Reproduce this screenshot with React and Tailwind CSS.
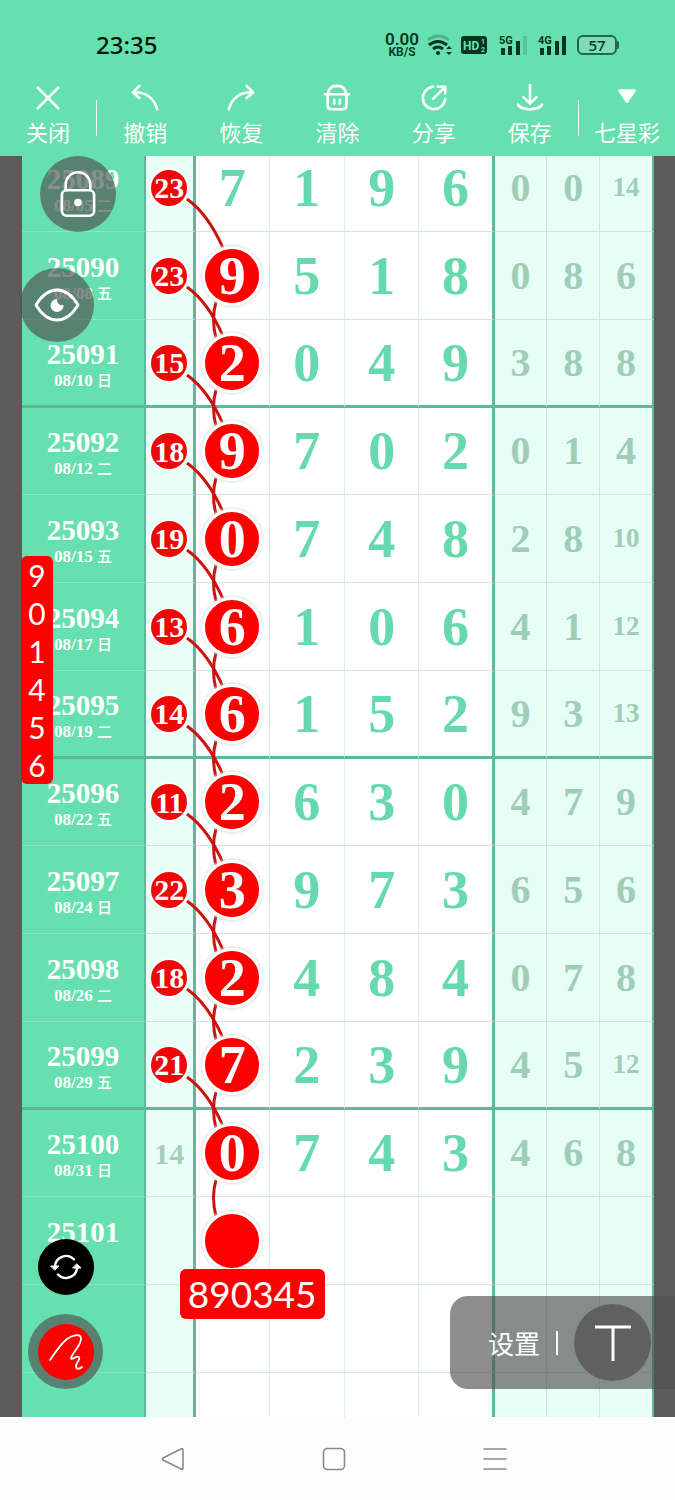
import React from "react";
import clsx from "clsx";

const ROWS = [
  { issue: "25089", date: "08/05", day: "二", sum: 23, main: [7, 1, 9, 6], rest: [0, 0, 14] },
  { issue: "25090", date: "08/08", day: "五", sum: 23, main: [9, 5, 1, 8], rest: [0, 8, 6] },
  { issue: "25091", date: "08/10", day: "日", sum: 15, main: [2, 0, 4, 9], rest: [3, 8, 8], weekEnd: true },
  { issue: "25092", date: "08/12", day: "二", sum: 18, main: [9, 7, 0, 2], rest: [0, 1, 4], weekStart: true },
  { issue: "25093", date: "08/15", day: "五", sum: 19, main: [0, 7, 4, 8], rest: [2, 8, 10] },
  { issue: "25094", date: "08/17", day: "日", sum: 13, main: [6, 1, 0, 6], rest: [4, 1, 12] },
  { issue: "25095", date: "08/19", day: "二", sum: 14, main: [6, 1, 5, 2], rest: [9, 3, 13], weekEnd: true },
  { issue: "25096", date: "08/22", day: "五", sum: 11, main: [2, 6, 3, 0], rest: [4, 7, 9], weekStart: true },
  { issue: "25097", date: "08/24", day: "日", sum: 22, main: [3, 9, 7, 3], rest: [6, 5, 6] },
  { issue: "25098", date: "08/26", day: "二", sum: 18, main: [2, 4, 8, 4], rest: [0, 7, 8] },
  { issue: "25099", date: "08/29", day: "五", sum: 21, main: [7, 2, 3, 9], rest: [4, 5, 12], weekEnd: true },
  { issue: "25100", date: "08/31", day: "日", sum: 14, plainSum: true, main: [0, 7, 4, 3], rest: [4, 6, 8], weekStart: true },
  { issue: "25101", main: ["", "", "", ""], rest: ["", "", ""], pick: "890345" },
  { issue: "", main: ["", "", "", ""], rest: ["", "", ""] },
  { issue: "", main: ["", "", "", ""], rest: ["", "", ""] },
];

const SIDE_DIGITS = ["9", "0", "1", "4", "5", "6"];

const strokeProps = {
  fill: "none",
  stroke: "currentColor",
  strokeWidth: 2.8,
  strokeLinecap: "round",
  strokeLinejoin: "round",
};

const TOOLS = [
  { label: "关闭", icon: <path d="M4 4L26 26M26 4L4 26" />, divider: true },
  { label: "撤销", icon: <path d="M9 2L2 9L9 15M2 9C15 8 25 15 28 27" /> },
  { label: "恢复", icon: <path d="M21 2L28 9L21 15M28 9C15 8 5 15 2 27" /> },
  {
    label: "清除",
    icon: <path d="M2 11H28M5 11C6 5 10 2 15 2C20 2 24 5 25 11M5 11V23Q5 27 9 27H21Q25 27 25 23V11M12 17V21M18 17V21" />,
  },
  { label: "分享", icon: <path d="M14 3A12 12 0 1 0 27 16M14 16L27 3M19 3H27V10" /> },
  { label: "保存", icon: <path d="M15 1V20M8 14L15 21L22 14M2 22Q5 27 15 27Q25 27 28 22" />, divider: true },
  { label: "七星彩", icon: <path d="M7 7H23L15 19Z" fill="currentColor" /> },
];

function SignalBars({ label, weak }) {
  return (
    <svg width="31" height="26" viewBox="0 0 31 26" fill="#06351f" className="overflow-visible" aria-hidden="true">
      <text x="0" y="12" fontSize="11" fontWeight="700" fontFamily="Roboto, sans-serif">{label}</text>
      <rect x="2" y="16" width="4" height="7" />
      <rect x="9" y="14" width="4" height="9" />
      <rect x="17" y="9" width="4" height="14" />
      <rect x="24" y="4" width="4" height="19" opacity={weak ? 0.15 : 1} />
    </svg>
  );
}

function StatusBar() {
  return (
    <div className="flex h-20 items-center pt-3 pr-14 pl-24 font-['Noto_Sans',sans-serif] text-[#06351f]">
      <span className="pb-0.5 text-2xl font-medium text-[#05140c]">23:35</span>
      <div className="ml-auto flex items-center gap-2 pb-0.5">
        <div className="flex flex-col items-center font-['Roboto',sans-serif] font-semibold">
          <span className="text-[17px] leading-[13px]">0.00</span>
          <span className="text-[12px] leading-3">KB/S</span>
        </div>
        <svg width="26" height="22" viewBox="0 0 26 22" fill="none" stroke="#06351f" strokeWidth="3" aria-hidden="true">
          <path d="M1 6Q11 -2 22 6" opacity="0.25" />
          <path d="M2 11Q11 4 20 11" />
          <path d="M6 15Q11 11 16 15" />
          <circle cx="11" cy="19" r="2" fill="#06351f" stroke="none" />
          <path d="M19 15L22 12L25 15ZM19 18L22 21L25 18Z" fill="#06351f" stroke="none" />
        </svg>
        <svg width="26" height="20" viewBox="0 0 26 20" aria-hidden="true">
          <rect x="0" y="1" width="26" height="18" rx="3" fill="#06351f" />
          <g fill="#66e0af" fontWeight="700" fontFamily="Roboto, sans-serif">
            <text x="2" y="15" fontSize="12">HD</text>
            <text x="20" y="9" fontSize="7">1</text>
            <text x="20" y="17" fontSize="7">2</text>
          </g>
        </svg>
        <div className="flex gap-2 pl-1">
          <SignalBars label="5G" weak />
          <SignalBars label="4G" />
        </div>
        <div className="flex items-center">
          <span className="flex h-5 w-10 items-center justify-center rounded-md border-2 border-[#1c6a4a] bg-[#7fdcb4] text-[15px] leading-4 font-medium">57</span>
          <span className="h-2 w-[2px] rounded-r bg-[#1c6a4a]" />
        </div>
      </div>
    </div>
  );
}

function Toolbar() {
  return (
    <nav className="flex h-[76px] items-center text-white">
      {TOOLS.map((tool) => (
        <React.Fragment key={tool.label}>
          <button type="button" className="flex h-full flex-1 flex-col items-center gap-[3px] pt-1">
            <svg width="28" height="28" viewBox="0 0 30 30" {...strokeProps} aria-hidden="true">
              {tool.icon}
            </svg>
            <span className="text-[22px] leading-8 whitespace-nowrap">{tool.label}</span>
          </button>
          {tool.divider && <span className="h-9 w-px bg-white/90" />}
        </React.Fragment>
      ))}
    </nav>
  );
}

function Ball({ row, index }) {
  const linked = index < 12;
  return (
    <div className="relative flex h-full items-center justify-center">
      {linked && (
        <svg className="absolute top-0 left-0 overflow-visible" width="74" height="88" fill="none" stroke="#c8150f" strokeWidth="3" aria-hidden="true">
          {!row.plainSum && <path d="M-9 55Q12 70 27 104" />}
          {index > 0 && <path d="M20 70Q15 87 20 106" />}
        </svg>
      )}
      {index === 0 ? (
        row.main[0]
      ) : (
        <span className="relative flex size-[60px] items-center justify-center rounded-full border-3 border-white bg-[#fd0000] text-white shadow-[0_0_3px_1px_#d8e4e0]">
          {row.main[0]}
        </span>
      )}
      {row.pick && (
        <span className="absolute top-[72px] -left-4 z-10 rounded-md bg-[#fd0000] px-2 font-['Lato',sans-serif] text-[37px] leading-[50px] font-normal text-white">
          {row.pick}
        </span>
      )}
    </div>
  );
}

function TrendRow({ row, index }) {
  const line = row.weekEnd ? "border-b-3 border-b-[#5fb899]" : "border-b border-b-[#cfe5dc]";
  const height = row.weekStart ? "h-[87px]" : "h-[88px]";
  return (
    <tr className={height}>
      <th scope="row" className={clsx("border-r-2 border-r-[#5fb899] bg-[#66e0af] p-0 text-white", row.weekEnd ? line : "border-b border-b-[#8be3c2]")}>
        <div className="pt-1 text-[29px] leading-[30px]">{row.issue}</div>
        <div className="h-[22px] text-[17px] leading-[22px]">
          {row.date} <span className="font-['Noto_Sans_CJK_SC',sans-serif] text-[15px] font-medium">{row.day}</span>
        </div>
      </th>
      <td className={clsx("border-r-3 border-r-[#5fb899] bg-[#e8fef6] p-0 text-center text-[30px]", line)}>
        {row.sum && (
          <span className={clsx("relative mx-auto flex size-9 items-center justify-center rounded-full", row.plainSum ? "text-[#a3cfb9]" : "bg-[#ee0808] text-white ring-2 ring-white/70")}>
            {row.sum}
          </span>
        )}
      </td>
      {row.main.map((value, i) => (
        <td
          key={i}
          className={clsx(
            "bg-white p-0 text-center text-[54px] leading-none text-[#66d9ae]",
            height,
            line,
            i === 3 ? "border-r-3 border-r-[#5fb899]" : "border-r border-r-[#dcebe5]"
          )}
        >
          {i === 0 && index < 13 ? <Ball row={row} index={index} /> : value}
        </td>
      ))}
      {row.rest.map((value, i) => (
        <td
          key={i}
          className={clsx(
            "bg-[#e6fef5] p-0 text-center leading-none text-[#a0cdb7]",
            line,
            value > 9 ? "text-[27px]" : "text-[40px]",
            i === 2 ? "border-r-2 border-r-[#5fb899]" : "border-r border-r-[#cfe5dc]"
          )}
        >
          {value}
        </td>
      ))}
    </tr>
  );
}

function TrendTable() {
  return (
    <table className="-mt-3 w-full table-fixed border-separate border-spacing-0 font-['Liberation_Serif','Noto_Sans_CJK_SC',serif] font-bold">
      <colgroup>
        <col className="w-[19.6%]" />
        <col className="w-[7.9%]" />
        <col className="w-[11.7%]" />
        <col className="w-[11.9%]" />
        <col className="w-[11.8%]" />
        <col className="w-[11.9%]" />
        <col className="w-[8.3%]" />
        <col className="w-[8.4%]" />
        <col className="w-[8.5%]" />
      </colgroup>
      <tbody>
        {ROWS.map((row, i) => (
          <TrendRow key={i} row={row} index={i} />
        ))}
      </tbody>
    </table>
  );
}

function FloatingTools() {
  return (
    <>
      <button type="button" aria-label="锁定" className="absolute top-0 left-10 z-20 flex size-[76px] items-center justify-center rounded-full bg-[#505050]/65 text-white">
        <svg width="36" height="48" viewBox="0 0 38 50" {...strokeProps}>
          <rect x="2" y="21" width="34" height="27" rx="5" />
          <path d="M6 21V15A13 13 0 0 1 32 15V21" />
          <circle cx="19" cy="34" r="4" fill="currentColor" stroke="none" />
        </svg>
      </button>
      <button type="button" aria-label="显示" className="absolute top-28 left-5 z-20 flex size-[74px] items-center justify-center rounded-full bg-[#505050]/65 text-white">
        <svg width="46" height="34" viewBox="0 0 46 34" {...strokeProps}>
          <path d="M2 17Q11 2 23 2Q35 2 44 17Q35 32 23 32Q11 32 2 17Z" />
          <path d="M23 11A6.500 6.500 0 1 0 29.500 17Q23 18 23 11Z" fill="currentColor" stroke="none" />
        </svg>
      </button>
      <div className="absolute top-[400px] left-[21px] z-20 flex w-8 flex-col items-center rounded-md bg-[#fd0000] font-['Lato',sans-serif] text-[30px] leading-[38px] text-white">
        {SIDE_DIGITS.map((digit) => (
          <span key={digit}>{digit}</span>
        ))}
      </div>
      <button type="button" aria-label="切换" className="absolute bottom-[122px] left-[38px] z-20 flex size-14 items-center justify-center rounded-full bg-black text-white">
        <svg width="32" height="28" viewBox="0 0 32 28" {...strokeProps} strokeWidth="2.400">
          <path d="M5 14A11 11 0 0 1 24 6.500M27 14A11 11 0 0 1 8 21.500" />
          <path d="M1 13H9L5 17ZM23 15H31L27 11Z" fill="currentColor" strokeWidth="1" />
        </svg>
      </button>
      <button type="button" aria-label="画笔" className="absolute bottom-7 left-7 z-20 flex size-[75px] items-center justify-center rounded-full bg-[#505050]/65 text-white">
        <span className="flex size-14 items-center justify-center rounded-full bg-[#fd0000]">
          <svg width="36" height="38" viewBox="0 0 36 38" {...strokeProps} strokeWidth="1.800">
            <path d="M2 27C8 18 14 10 19 6C23 3 30 1 32 3C34 5 33 8 31 12C28 17 23 23 23 25C23 28 29 22 31 24C33 26 28 30 28 33C28 37 32 36 34 34" />
          </svg>
        </span>
      </button>
      <div className="absolute right-0 bottom-7 z-20 flex h-[93px] items-center rounded-l-[18px] bg-[#505050]/65 pr-6 pl-[38px] text-white">
        <button type="button" className="text-[26px] leading-10">设置</button>
        <span className="mx-4 h-6 w-[2px] bg-white" />
        <button type="button" aria-label="文字" className="flex size-[77px] items-center justify-center rounded-full bg-[#606060]">
          <svg width="36" height="36" viewBox="0 0 36 36" fill="none" stroke="currentColor" strokeWidth="3" aria-hidden="true">
            <path d="M0 2H36M18 2V36" />
          </svg>
        </button>
      </div>
    </>
  );
}

function SystemNav() {
  return (
    <footer className="flex h-[83px] shrink-0 items-center justify-center bg-[#fdfdfd] pr-2 text-[#8a8a8a]">
      <div className="flex gap-[137px]">
        <button type="button" aria-label="返回">
          <svg width="24" height="24" viewBox="0 0 24 24" {...strokeProps} strokeWidth="1.600">
            <path d="M20 2Q22 1 22 3V21Q22 23 20 22L2 13Q1 12 2 11Z" />
          </svg>
        </button>
        <button type="button" aria-label="主页">
          <svg width="24" height="24" viewBox="0 0 24 24" {...strokeProps} strokeWidth="1.600">
            <rect x="1.500" y="1.500" width="21" height="21" rx="4" />
          </svg>
        </button>
        <button type="button" aria-label="菜单">
          <svg width="24" height="24" viewBox="0 0 24 24" {...strokeProps} strokeWidth="1.600">
            <path d="M1 2H23M1 12H23M1 22H23" />
          </svg>
        </button>
      </div>
    </footer>
  );
}

export default function App() {
  return (
    <div className="flex h-screen flex-col overflow-hidden bg-[#5c5c5c] font-['Noto_Sans_CJK_SC',sans-serif]">
      <header className="shrink-0 bg-[#66e0af]">
        <StatusBar />
        <Toolbar />
      </header>
      <main className="relative min-h-0 flex-1">
        <div className="h-full overflow-hidden pr-[21px] pl-[22px]">
          <TrendTable />
        </div>
        <FloatingTools />
      </main>
      <SystemNav />
    </div>
  );
}
